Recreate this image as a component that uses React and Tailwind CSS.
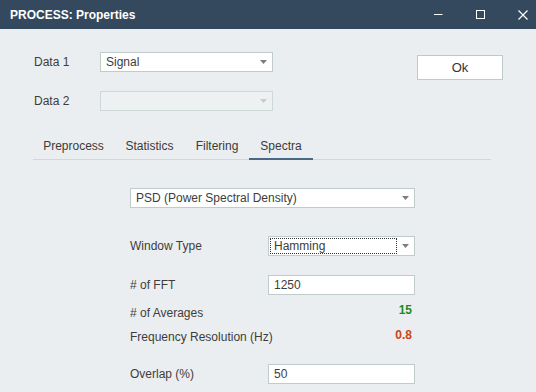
import React from "react";

const Arrow = ({ light }) => (
  <svg width="7" height="4" viewBox="0 0 7 4" className="shrink-0">
    <path d="M0 0h7L3.5 4z" fill={light ? "#c8cccc" : "#7d7d7d"} />
  </svg>
);

const Select = ({ value, width, disabled, focus }) => (
  <div
    className={`h-[20px] ${width} flex items-center justify-between border ${
      disabled ? "border-[#cfd8d8] bg-[#eef1f1]" : "border-[#c0cccc] bg-white"
    } pr-[5px]`}
  >
    {focus ? (
      <div className="ml-[1px] h-[16px] flex-1 mr-[5px] border border-dotted border-[#333] flex items-center pl-[3px] leading-none">
        {value}
      </div>
    ) : (
      <span className="pl-[5px] leading-none">{value}</span>
    )}
    <Arrow light={disabled} />
  </div>
);

const Input = ({ value }) => (
  <div className="h-[20px] w-[147px] flex items-center bg-white border border-[#c0cccc] pl-[5px] leading-none">
    {value}
  </div>
);

export default function App() {
  const tabs = [
    ["Preprocess", "w-[81px]"],
    ["Statistics", "w-[71px]"],
    ["Filtering", "w-[64px]"],
    ["Spectra", "w-[64px]"],
  ];
  return (
    <div
      className="w-[536px] h-[392px] bg-[#ebeef0] text-[12px] text-[#3d3d3d] overflow-hidden"
      style={{ fontFamily: '"Liberation Sans", Arial, sans-serif' }}
    >
      {/* Title bar */}
      <div className="h-[29px] bg-[#34495e] flex items-center pl-[10px] pr-[8px] text-white">
        <div className="font-bold text-[12px] leading-none flex-1">PROCESS: Properties</div>
        <div className="flex items-center">
          <svg width="9" height="9" viewBox="0 0 9 9">
            <path d="M0 4.5h8.5" stroke="white" strokeWidth="1" />
          </svg>
          <svg width="9" height="9" viewBox="0 0 9 9" className="ml-[33px]">
            <rect x="0.5" y="0.5" width="8" height="8" fill="none" stroke="white" strokeWidth="1" />
          </svg>
          <svg width="10" height="10" viewBox="0 0 10 10" className="ml-[33px]">
            <path d="M0.5 0.5l9 9M9.5 0.5l-9 9" stroke="white" strokeWidth="1.2" />
          </svg>
        </div>
      </div>

      {/* Top section */}
      <div className="flex pt-[23px]">
        <div className="flex flex-col gap-[19px]">
          <div className="flex items-center h-[20px]">
            <div className="w-[100px] pl-[34px]">Data 1</div>
            <Select value="Signal" width="w-[173px]" />
          </div>
          <div className="flex items-center h-[20px]">
            <div className="w-[100px] pl-[34px]">Data 2</div>
            <Select value="" width="w-[173px]" disabled />
          </div>
        </div>
        <div className="ml-[144px] pt-[3px]">
          <button className="w-[86px] h-[25px] bg-white border border-[#bccaca] text-[13px] text-[#333] flex items-center justify-center leading-none">
            Ok
          </button>
        </div>
      </div>

      {/* Tabs */}
      <div className="mt-[23px] ml-[33px] w-[458px] flex border-b border-[#d2d7da]">
        {tabs.map(([t, w], i) => (
          <div
            key={t}
            className={`${w} text-center pt-[4px] pb-[4px] leading-[16px] border-b-2 -mb-px ${
              i === 3 ? "border-[#4a6785]" : "border-transparent"
            } text-[#3a3a3a]`}
          >
            {t}
          </div>
        ))}
      </div>

      {/* Spectra content */}
      <div className="ml-[130px] w-[285px]">
        <div className="mt-[28px]">
          <Select value="PSD (Power Spectral Density)" width="w-[285px]" />
        </div>
        <div className="mt-[28px] h-[20px] flex items-center justify-between">
          <span>Window Type</span>
          <Select value="Hamming" width="w-[147px]" focus />
        </div>
        <div className="mt-[19px] h-[20px] flex items-center justify-between">
          <span>{"# of FFT"}</span>
          <Input value="1250" />
        </div>
        <div className="mt-[7px] h-[20px] flex items-center justify-between">
          <span className="pt-[2px]">{"# of Averages"}</span>
          <span className="font-bold text-[#1f8a1f] pr-[3px] mb-[4px]">15</span>
        </div>
        <div className="mt-[4px] h-[20px] flex items-center justify-between">
          <span className="pt-[2px]">Frequency Resolution (Hz)</span>
          <span className="font-bold text-[#cc4314] pr-[3px] mb-[3px]">0.8</span>
        </div>
        <div className="mt-[18px] h-[20px] flex items-center justify-between">
          <span>Overlap (%)</span>
          <Input value="50" />
        </div>
      </div>
    </div>
  );
}
